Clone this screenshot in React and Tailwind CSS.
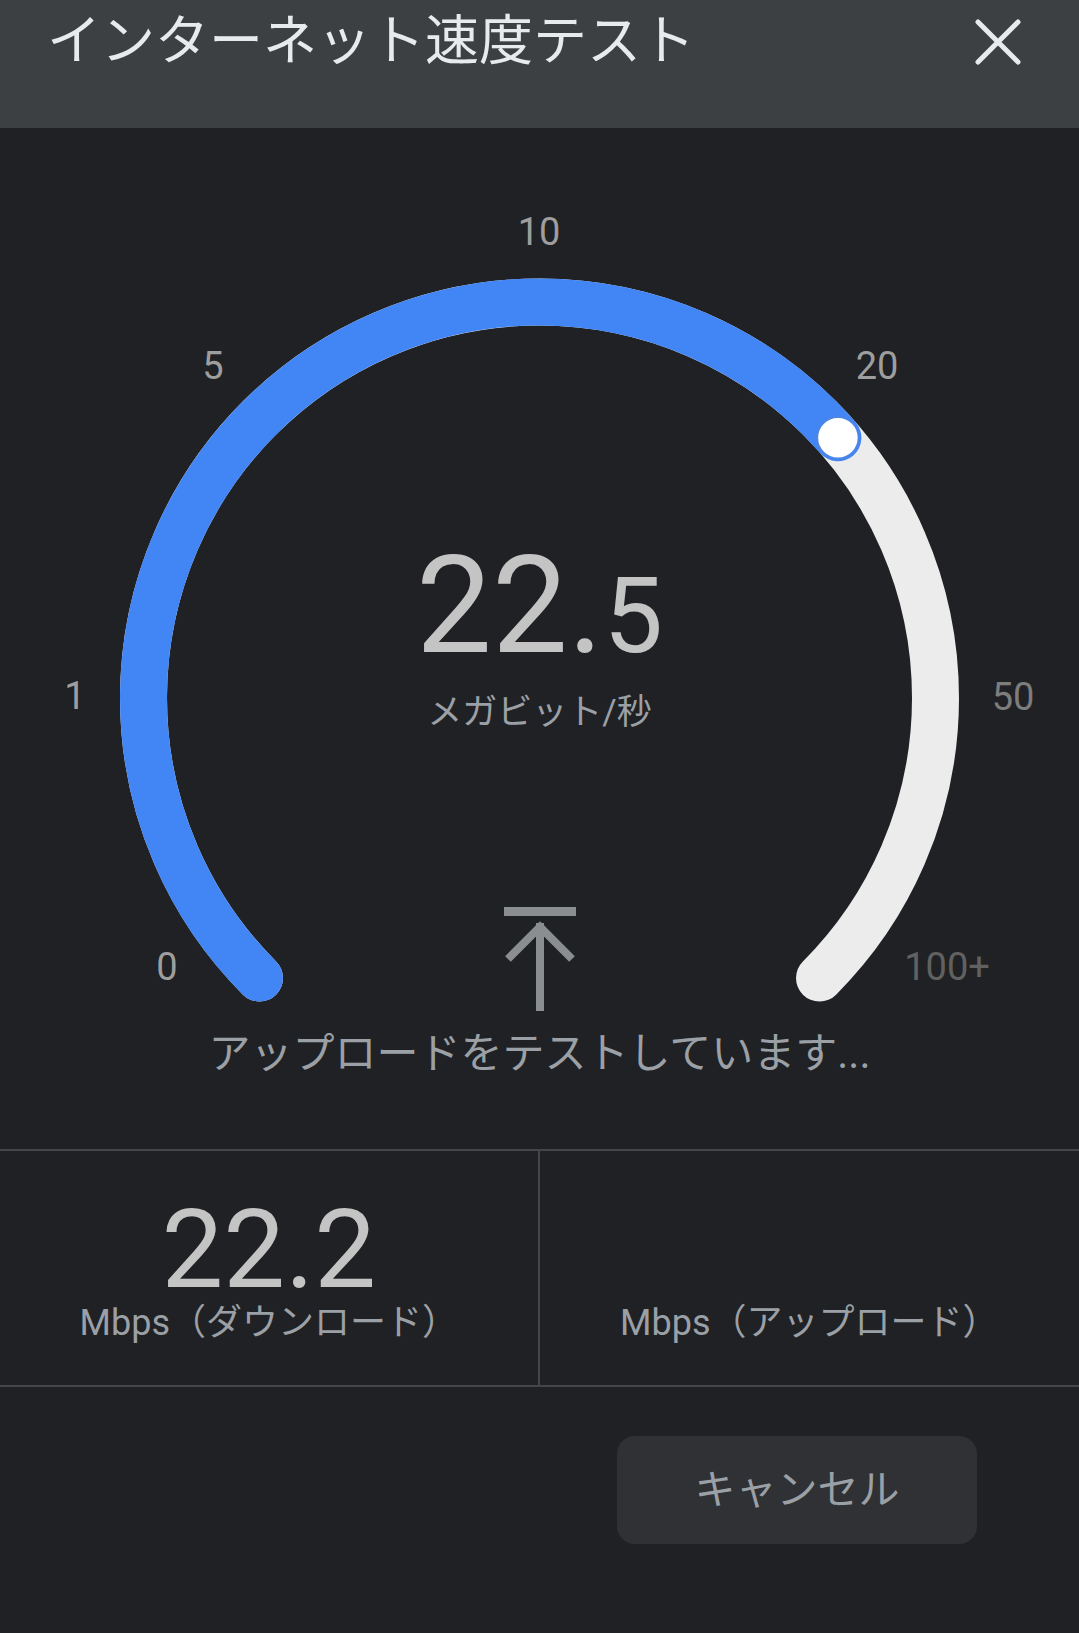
const CX = 539.5;
const CY = 570;
const R = 396;

const pt = (deg) => {
  const a = (deg * Math.PI) / 180;
  return [CX + R * Math.sin(a), CY - R * Math.cos(a)];
};

const Gauge = ({ angle }) => {
  const [sx, sy] = pt(-135);
  const [ex, ey] = pt(135);
  const [px, py] = pt(angle);
  const large = angle + 135 > 180 ? 1 : 0;

  return (
    <svg className="absolute inset-0" width="1079" height="1021" viewBox="0 0 1079 1021">
      {/* track */}
      <path
        d={`M ${sx} ${sy} A ${R} ${R} 0 1 1 ${ex} ${ey}`}
        fill="none"
        stroke="#ececec"
        strokeWidth="47"
        strokeLinecap="round"
      />
      {/* progress */}
      <path
        d={`M ${sx} ${sy} A ${R} ${R} 0 ${large} 1 ${px} ${py}`}
        fill="none"
        stroke="#4285f4"
        strokeWidth="47"
        strokeLinecap="round"
      />
      <circle cx={px} cy={py} r="21" fill="#ffffff" stroke="#4a86e8" strokeWidth="2.5" />
    </svg>
  );
};

const UploadIcon = () => (
  <svg width="72" height="104" viewBox="0 0 72 104">
    <rect x="0" y="0" width="72" height="9" fill="#8a8e91" />
    <line x1="36" y1="16" x2="36" y2="104" stroke="#8a8e91" strokeWidth="8" />
    <polyline points="4,52 36,20 68,52" fill="none" stroke="#8a8e91" strokeWidth="8" strokeLinejoin="miter" />
  </svg>
);

export default function App() {
  return (
    <div className="min-h-[1633px] w-full bg-[#202124] font-['Roboto','Noto_Sans_CJK_JP',sans-serif]">
      {/* Header */}
      <header className="h-[128px] bg-[#3c4043] flex items-start justify-between pl-[47px] pr-[57px] pt-[15px]">
        <h1 className="text-[54px] leading-none font-normal text-[#e8eaed]">インターネット速度テスト</h1>
        <button className="mt-[3px]" aria-label="閉じる">
          <svg width="48" height="48" viewBox="0 0 48 48">
            <path d="M4 4 L44 44 M44 4 L4 44" stroke="#e8eaed" strokeWidth="5" strokeLinecap="round" />
          </svg>
        </button>
      </header>

      {/* Gauge */}
      <section className="relative h-[1021px] flex flex-col items-center">
        <Gauge angle={48.9} />

        <span className="absolute left-[167px] top-[839px] -translate-x-1/2 -translate-y-1/2 text-[38px] leading-none text-[#9e9e9e]">0</span>
        <span className="absolute left-[75px] top-[568px] -translate-x-1/2 -translate-y-1/2 text-[38px] leading-none text-[#9e9e9e]">1</span>
        <span className="absolute left-[213px] top-[238px] -translate-x-1/2 -translate-y-1/2 text-[38px] leading-none text-[#9e9e9e]">5</span>
        <span className="absolute left-[539px] top-[104px] -translate-x-1/2 -translate-y-1/2 text-[38px] leading-none text-[#9e9e9e]">10</span>
        <span className="absolute left-[877px] top-[238px] -translate-x-1/2 -translate-y-1/2 text-[38px] leading-none text-[#9e9e9e]">20</span>
        <span className="absolute left-[1013px] top-[569px] -translate-x-1/2 -translate-y-1/2 text-[38px] leading-none text-[#7d7d7d]">50</span>
        <span className="absolute left-[947px] top-[839px] -translate-x-1/2 -translate-y-1/2 text-[38px] leading-none text-[#616161]">100+</span>

        <div className="relative mt-[411px] text-[135px] leading-none text-[#c4c4c4]">
          22.<span className="text-[106px]">5</span>
        </div>
        <div className="relative mt-[21px] text-[35px] leading-none text-[#9aa0a6]">メガビット/秒</div>

        <div className="relative mt-[177px]">
          <UploadIcon />
        </div>
        <div className="relative mt-[22px] text-[42px] leading-none text-[#9aa0a6]">アップロードをテストしています...</div>
      </section>

      {/* Results */}
      <div className="grid grid-cols-2 border-y-2 border-[#444649]">
        <div className="h-[234px] flex flex-col items-center justify-center border-r-2 border-[#444649]">
          <div className="h-[110px] text-[110px] leading-none text-[#c4c4c4]">22.2</div>
          <div className="text-[36px] leading-none text-[#9aa0a6]">Mbps（ダウンロード）</div>
        </div>
        <div className="h-[234px] flex flex-col items-center justify-center">
          <div className="h-[110px]" />
          <div className="text-[36px] leading-none text-[#9aa0a6]">Mbps（アップロード）</div>
        </div>
      </div>

      {/* Actions */}
      <div className="flex justify-end pr-[102px] pt-[49px]">
        <button className="w-[360px] h-[108px] rounded-[18px] bg-[#303134] text-[41px] leading-none text-[#9aa0a6]">
          キャンセル
        </button>
      </div>
    </div>
  );
}
